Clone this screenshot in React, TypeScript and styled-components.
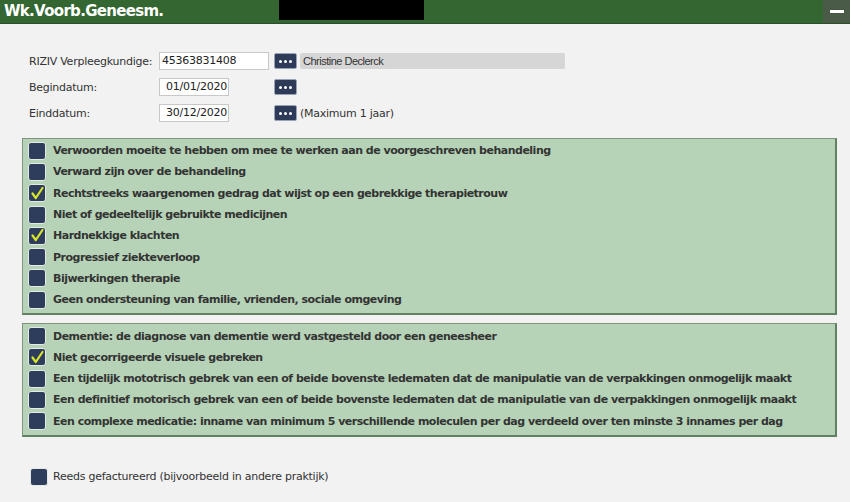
import styled, {createGlobalStyle} from "styled-components";

const GlobalStyle = createGlobalStyle`
    html, body {
        margin: 0;
        padding: 0;
        background: #f2f2f2;
    }
    body {
        font-family: "DejaVu Sans", Verdana, sans-serif;
        font-size: 11px;
        letter-spacing: -0.25px;
        color: #333;
    }
`

const groupOne = [
    {label: 'Verwoorden moeite te hebben om mee te werken aan de voorgeschreven behandeling', checked: false},
    {label: 'Verward zijn over de behandeling', checked: false},
    {label: 'Rechtstreeks waargenomen gedrag dat wijst op een gebrekkige therapietrouw', checked: true},
    {label: 'Niet of gedeeltelijk gebruikte medicijnen', checked: false},
    {label: 'Hardnekkige klachten', checked: true},
    {label: 'Progressief ziekteverloop', checked: false},
    {label: 'Bijwerkingen therapie', checked: false},
    {label: 'Geen ondersteuning van familie, vrienden, sociale omgeving', checked: false},
]

const groupTwo = [
    {label: 'Dementie: de diagnose van dementie werd vastgesteld door een geneesheer', checked: false},
    {label: 'Niet gecorrigeerde visuele gebreken', checked: true},
    {label: 'Een tijdelijk mototrisch gebrek van een of beide bovenste ledematen dat de manipulatie van de verpakkingen onmogelijk maakt', checked: false},
    {label: 'Een definitief motorisch gebrek van een of beide bovenste ledematen dat de manipulatie van de verpakkingen onmogelijk maakt', checked: false},
    {label: 'Een complexe medicatie: inname van minimum 5 verschillende moleculen per dag verdeeld over ten minste 3 innames per dag', checked: false},
]

function CheckBox({checked}: { checked: boolean }) {
    return <Box>
        {checked && <svg width="15" height="15" viewBox="0 0 15 15">
            <path d="M2.5 7.5 L5.8 12 L12.5 2" fill="none" stroke="#d8e62a" strokeWidth="2.2"
                  strokeLinecap="round" strokeLinejoin="round"/>
        </svg>}
    </Box>
}

function DotsButton() {
    return <Dots>
        <Dot/><Dot/><Dot/>
    </Dots>
}

export default function App() {
    return <>
        <GlobalStyle/>
        <Header>
            <Title>Wk.Voorb.Geneesm.</Title>
            <Redacted/>
            <Spacer/>
            <MinButton><MinBar/></MinButton>
        </Header>
        <Content>
            <Form>
                <FieldRow>
                    <Label>RIZIV Verpleegkundige:</Label>
                    <Input $width={110}>45363831408</Input>
                    <DotsButton/>
                    <NameBox>Christine Declerck</NameBox>
                </FieldRow>
                <FieldRow>
                    <Label>Begindatum:</Label>
                    <Input $width={70} $center>01/01/2020</Input>
                    <ButtonGap/>
                    <DotsButton/>
                </FieldRow>
                <FieldRow>
                    <Label>Einddatum:</Label>
                    <Input $width={70} $center>30/12/2020</Input>
                    <ButtonGap/>
                    <DotsButton/>
                    <Hint>(Maximum 1 jaar)</Hint>
                </FieldRow>
            </Form>

            <Panel>
                {groupOne.map(item =>
                    <CheckRow key={item.label}>
                        <CheckBox checked={item.checked}/>
                        <CheckLabel>{item.label}</CheckLabel>
                    </CheckRow>)}
            </Panel>

            <Panel>
                {groupTwo.map(item =>
                    <CheckRow key={item.label}>
                        <CheckBox checked={item.checked}/>
                        <CheckLabel>{item.label}</CheckLabel>
                    </CheckRow>)}
            </Panel>

            <FooterRow>
                <CheckBox checked={false}/>
                <FooterLabel>Reeds gefactureerd (bijvoorbeeld in andere praktijk)</FooterLabel>
            </FooterRow>
        </Content>
    </>
}

const Header = styled.div`
    height: 23px;
    display: flex;
    align-items: stretch;
    background: #346632;
    border-bottom: 1px solid #2a4f29;
`

const Title = styled.div`
    width: 279px;
    padding-left: 4px;
    box-sizing: border-box;
    font-size: 15px;
    font-weight: bold;
    color: #fff;
    line-height: 23px;
    letter-spacing: -0.7px;
`

const Redacted = styled.div`
    width: 145px;
    height: 20px;
    background: #000;
`

const Spacer = styled.div`
    flex: 1;
`

const MinButton = styled.div`
    width: 27px;
    background: #4a5c47;
    display: flex;
    align-items: center;
    justify-content: center;
`

const MinBar = styled.div`
    width: 14px;
    height: 3px;
    background: #fff;
    box-shadow: 0 0 1px #223;
`

const Content = styled.div`
    padding: 28px 12px 0 22px;
`

const Form = styled.div`
    display: flex;
    flex-direction: column;
    gap: 8px;
    padding-left: 7px;
    margin-bottom: 16px;
`

const FieldRow = styled.div`
    display: flex;
    align-items: center;
    height: 18px;
`

const Label = styled.div`
    width: 130px;
    color: #333;
    white-space: nowrap;
`

const Input = styled.div<{ $width: number; $center?: boolean }>`
    width: ${p => p.$width}px;
    height: 18px;
    box-sizing: border-box;
    background: #fff;
    border: 1px solid #c8c8c8;
    padding-left: ${p => p.$center ? 6 : 2}px;
    line-height: 16px;
    color: #222;
`

const ButtonGap = styled.div`
    width: 40px;
`

const Dots = styled.div`
    margin-left: 5px;
    width: 23px;
    height: 16px;
    background: #2e3b58;
    border: 1px solid #9aa3b3;
    border-radius: 2px;
    box-sizing: border-box;
    display: flex;
    align-items: center;
    justify-content: center;
    gap: 2px;
`

const Dot = styled.span`
    width: 3px;
    height: 3px;
    background: #fff;
    border-radius: 50%;
`

const NameBox = styled.div`
    margin-left: 3px;
    width: 265px;
    height: 16px;
    background: #d6d6d6;
    border-radius: 2px;
    padding-left: 3px;
    box-sizing: border-box;
    line-height: 16px;
    font-family: "Liberation Sans", Arial, sans-serif;
    font-size: 11px;
    letter-spacing: -0.5px;
    color: #333;
`

const Hint = styled.div`
    margin-left: 3px;
    color: #333;
`

const Panel = styled.div`
    width: 815px;
    box-sizing: border-box;
    background: #b6d3b7;
    border: 1px solid #7f937f;
    border-right: 2px solid #628062;
    border-bottom: 2px solid #628062;
    padding: 1px 0 3px 5px;
    margin-bottom: 8px;
    display: flex;
    flex-direction: column;
`

const CheckRow = styled.div`
    display: flex;
    align-items: center;
    gap: 7px;
    height: 21.3px;
`

const Box = styled.div`
    width: 18px;
    height: 18px;
    box-sizing: border-box;
    background: #2f3d5c;
    border: 1px solid #e4ebe4;
    border-radius: 3px;
    display: flex;
    align-items: center;
    justify-content: center;
    flex-shrink: 0;
`

const CheckLabel = styled.div`
    font-weight: bold;
    color: #333;
    white-space: nowrap;
    letter-spacing: -0.5px;
`

const FooterRow = styled.div`
    display: flex;
    align-items: center;
    gap: 5px;
    margin-top: 31px;
    padding-left: 8px;
`

const FooterLabel = styled.div`
    color: #333;
`
